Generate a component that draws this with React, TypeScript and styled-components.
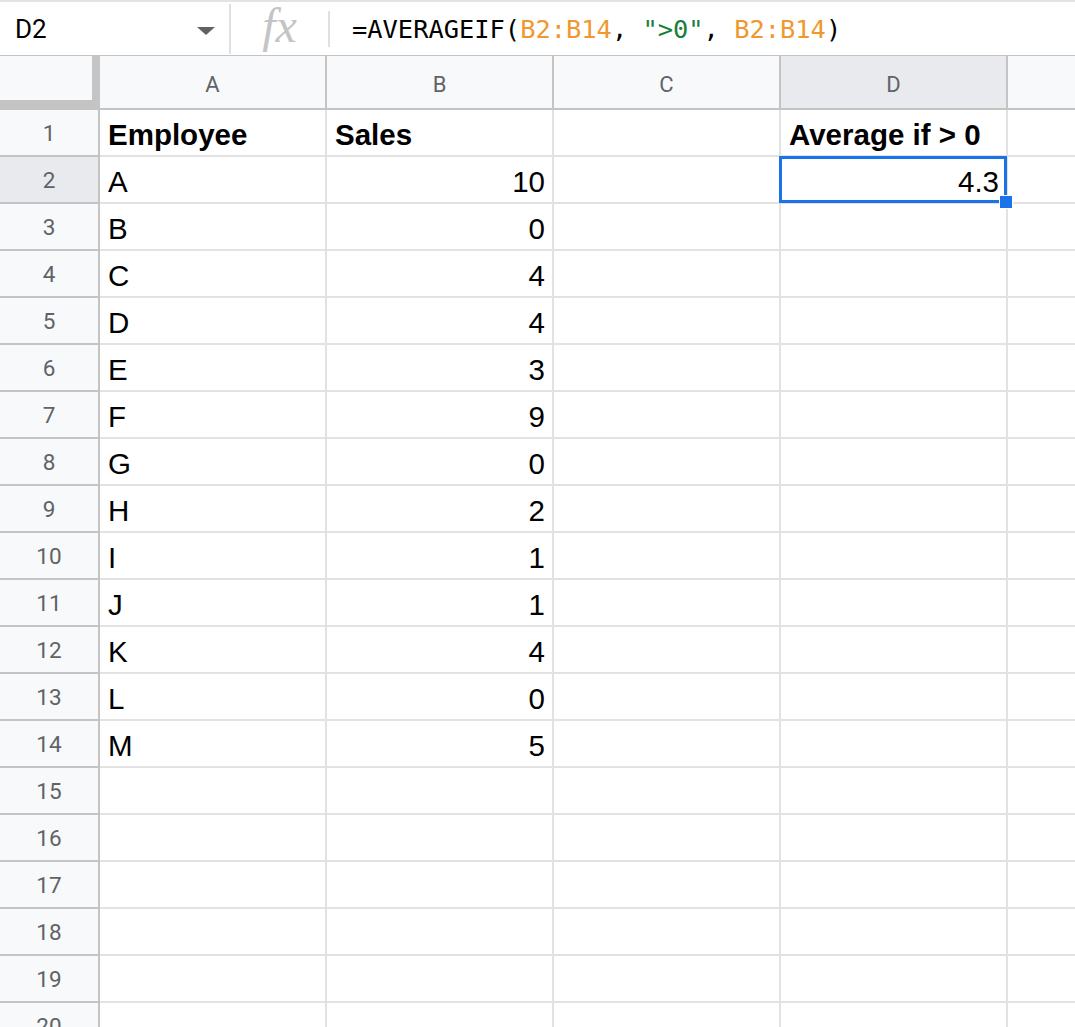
import React from "react";
import styled, { createGlobalStyle } from "styled-components";

const GlobalStyle = createGlobalStyle`
  html, body {
    margin: 0;
    padding: 0;
    background: #fff;
    overflow: hidden;
  }
  * {
    box-sizing: border-box;
  }
`;

const columns = ["A", "B", "C", "D", "E"];

const data: string[][] = [
    ["Employee", "Sales", "", "Average if > 0"],
    ["A", "10", "", "4.3"],
    ["B", "0"],
    ["C", "4"],
    ["D", "4"],
    ["E", "3"],
    ["F", "9"],
    ["G", "0"],
    ["H", "2"],
    ["I", "1"],
    ["J", "1"],
    ["K", "4"],
    ["L", "0"],
    ["M", "5"],
];

const TOTAL_ROWS = 21;

export default function App() {
    const rows = Array.from({ length: TOTAL_ROWS }, (_, i) => data[i] || []);
    return (
        <Page>
            <GlobalStyle />
            <FormulaBar>
                <NameBox>
                    <span>D2</span>
                    <svg width="18" height="8" viewBox="0 0 18 8">
                        <path d="M0 0 L18 0 L9 8 Z" fill="#5f6368" />
                    </svg>
                </NameBox>
                <Divider />
                <FxBox>fx</FxBox>
                <Divider $short />
                <Formula>
                    =AVERAGEIF(<Ref>B2:B14</Ref>, <Str>"&gt;0"</Str>, <Ref>B2:B14</Ref>)
                </Formula>
            </FormulaBar>
            <Sheet>
                <Corner />
                {columns.map(c => (
                    <ColHeader key={c} $active={c === "D"}>{c}</ColHeader>
                ))}
                {rows.map((row, r) => (
                    <React.Fragment key={r}>
                        <RowHeader $active={r === 1}>{r + 1}</RowHeader>
                        {columns.map((c, ci) => {
                            const value = row[ci] || "";
                            const numeric = value !== "" && !isNaN(Number(value));
                            const selected = r === 1 && c === "D";
                            return (
                                <Cell key={c} $bold={r === 0} $right={numeric}>
                                    {value}
                                    {selected && (
                                        <Selection>
                                            <FillHandle />
                                        </Selection>
                                    )}
                                </Cell>
                            );
                        })}
                    </React.Fragment>
                ))}
            </Sheet>
        </Page>
    );
}

const Page = styled.div`
    width: 100%;
    height: 100vh;
    overflow: hidden;
    background: #fff;
`

const FormulaBar = styled.div`
    display: flex;
    align-items: stretch;
    height: 56px;
    border-top: 2px solid #e3e3e3;
    border-bottom: 1px solid #c4c4c4;
    background: #fff;
`

const NameBox = styled.div`
    width: 229px;
    display: flex;
    align-items: center;
    justify-content: space-between;
    padding: 0 14px 0 15px;
    font-family: Roboto, "Liberation Sans", sans-serif;
    font-size: 26px;
    color: #000;

    svg {
        margin-top: 4px;
    }
`

const Divider = styled.div<{ $short?: boolean }>`
    width: 2px;
    background: #e0e0e0;
    align-self: center;
    height: ${p => (p.$short ? "36px" : "50px")};
`

const FxBox = styled.div`
    width: 97px;
    display: flex;
    align-items: center;
    justify-content: center;
    font-family: "Liberation Serif", serif;
    font-style: italic;
    font-size: 48px;
    color: #c4c4c4;
    padding-bottom: 6px;
`

const Formula = styled.div`
    display: flex;
    align-items: center;
    padding-left: 22px;
    font-family: "DejaVu Sans Mono", "Liberation Mono", monospace;
    font-size: 25.4px;
    color: #000;
    white-space: pre;
`

const Ref = styled.span`
    color: #f0982f;
`

const Str = styled.span`
    color: #188038;
`

const Sheet = styled.div`
    display: grid;
    grid-template-columns: 100px repeat(5, 227px);
    grid-template-rows: 54px;
    grid-auto-rows: 47px;
    width: max-content;
`

const Corner = styled.div`
    background: #f8f9fa;
    border-right: 8px solid #c4c4c4;
    border-bottom: 10px solid #c4c4c4;
`

const ColHeader = styled.div<{ $active?: boolean }>`
    display: flex;
    align-items: center;
    justify-content: center;
    padding-top: 4px;
    background: ${p => (p.$active ? "#e8eaed" : "#f8f9fa")};
    border-right: 2px solid #c4c4c4;
    border-bottom: 2px solid #c4c4c4;
    font-family: Roboto, "Liberation Sans", sans-serif;
    font-size: 22px;
    color: #5f6368;
`

const RowHeader = styled.div<{ $active?: boolean }>`
    display: flex;
    align-items: center;
    justify-content: center;
    background: ${p => (p.$active ? "#e8eaed" : "#f8f9fa")};
    border-right: 2px solid #c4c4c4;
    border-bottom: 2px solid #c4c4c4;
    font-family: Roboto, "Liberation Sans", sans-serif;
    font-size: 22.5px;
    color: #5f6368;
`

const Cell = styled.div<{ $bold?: boolean; $right?: boolean }>`
    position: relative;
    display: flex;
    align-items: flex-end;
    justify-content: ${p => (p.$right ? "flex-end" : "flex-start")};
    padding: 0 7px 3px 8px;
    border-right: 2px solid #e2e2e2;
    border-bottom: 2px solid #e2e2e2;
    font-family: "Liberation Sans", Arial, sans-serif;
    font-size: 29.5px;
    line-height: 34px;
    font-weight: ${p => (p.$bold ? 700 : 400)};
    color: #000;
    white-space: nowrap;
`

const Selection = styled.div`
    position: absolute;
    z-index: 2;
    top: -1px;
    left: -2px;
    right: -1px;
    bottom: -1px;
    border: 3px solid #1a73e8;
    pointer-events: none;
`

const FillHandle = styled.div`
    position: absolute;
    right: -9px;
    bottom: -9px;
    width: 14px;
    height: 14px;
    background: #1a73e8;
    border: 1px solid #fff;
`
